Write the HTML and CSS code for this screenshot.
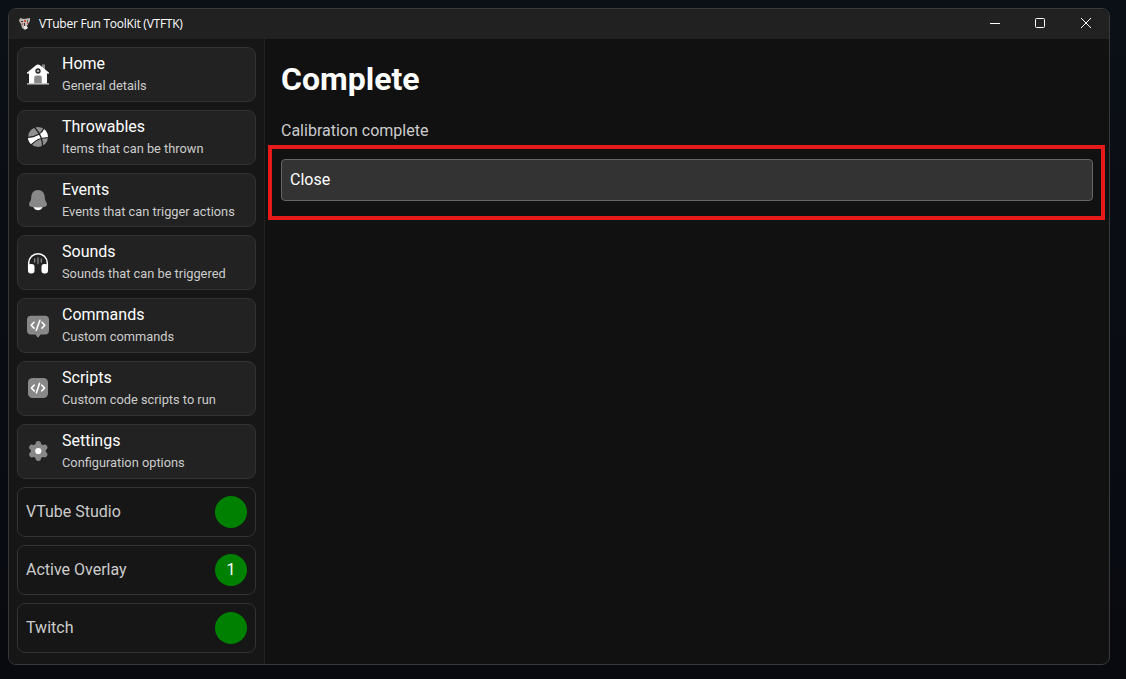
FILE: index.html
```html
<!DOCTYPE html>
<html lang="en">
<head>
<meta charset="utf-8">
<title>VTuber Fun ToolKit (VTFTK)</title>
<link rel="stylesheet" href="styles.css">
</head>
<body>
<div class="window">
  <header class="titlebar">
    <svg class="logo" viewBox="0 0 12 14"><path fill="#bdb7b3" d="M1 1 5 2 11 1 11 4 9 7 9 11 6 13 3 11 2 7 0 4Z"/><path fill="#40342f" d="M2 4h2v1H2zM5 6h1v3H5zM8 8h1v2H8z"/><path fill="#c5533e" d="M5 3h2v2H5zM3 6h1v2H3zM8 5h1v2H8z"/><path fill="#e9e6e3" d="M5 9h3v3H5z"/><path fill="#55745a" d="M8 3h1v2H8z"/></svg>
    <span class="app-name">VTuber Fun ToolKit (VTFTK)</span>
    <div class="controls">
      <svg viewBox="0 0 12 12"><path d="M1 6.5h10"/></svg>
      <svg viewBox="0 0 12 12"><rect x="1.5" y="1.5" width="9" height="9" rx="1"/></svg>
      <svg viewBox="0 0 12 12"><path d="m1 1 10 10M11 1 1 11"/></svg>
    </div>
  </header>
  <div class="body">
    <nav class="sidebar">
      <a class="item">
        <svg viewBox="0 0 24 24"><path fill="#888" d="M16 2.500h3v6l-3-2z"/><path fill="#fff" d="M3 21.800V11.200l-1.400.7-.7-1.200L9.700 3.400q2.300-1.800 4.600 0l8.800 7.300-.7 1.200-1.400-.7v10.600z"/><path fill="#ccc" d="M1 21.300h22v1.300H1z"/><path fill="#888" d="M8.200 21.300v-5.500q0-2.300 2.300-2.300h3q2.300 0 2.300 2.300v5.500z"/><circle cx="12" cy="9" r="2" fill="#aaa" stroke="#222" stroke-width="1.300"/></svg>
        <div class="text"><span class="name">Home</span><span class="desc">General details</span></div>
      </a>
      <a class="item">
        <svg viewBox="0 0 24 24"><circle cx="12" cy="12" r="10" fill="#909090"/><path fill="#fff" d="M2 12.500Q9 12.500 14 8.800 16.500 7 18 4 22 7.500 22 12.600 17 12 12.500 15 8 17.500 5.500 19.600 2 16.500 2 12.500Z"/><path fill="none" stroke="#222" stroke-width="1.200" d="M8.300 2Q17.500 12 16.500 22.500M1.500 12.300Q14 12 18.200 3M5 20Q12.500 12 22.500 12.800"/></svg>
        <div class="text"><span class="name">Throwables</span><span class="desc">Items that can be thrown</span></div>
      </a>
      <a class="item">
        <svg viewBox="0 0 24 24"><path fill="#fff" d="M7 18.500h10q-1.500 3.700-5 3.700t-5-3.700z"/><path fill="#888" d="M12 2c4 0 6.500 2.900 6.700 6.500.1 3.200.5 4 1.600 5.700 1.200 2 .8 4-1.100 4.500-4.600 1-9.800 1-14.400 0-1.900-.5-2.300-2.500-1.100-4.500 1.100-1.700 1.500-2.500 1.600-5.700C5.500 4.900 8 2 12 2Z"/></svg>
        <div class="text"><span class="name">Events</span><span class="desc">Events that can trigger actions</span></div>
      </a>
      <a class="item">
        <svg viewBox="0 0 24 24"><path fill="none" stroke="#fff" stroke-width="1.500" d="M2.700 18v-6a9.300 9.300 0 0 1 18.600 0v6"/><rect x="2" y="13" width="6.500" height="9.500" rx="2.700" fill="#fff"/><rect x="15.500" y="13" width="6.500" height="9.500" rx="2.700" fill="#fff"/><path stroke="#888" stroke-width="1.300" stroke-linecap="round" d="M8.700 8v3M12 7v5.500M15.300 8v3"/></svg>
        <div class="text"><span class="name">Sounds</span><span class="desc">Sounds that can be triggered</span></div>
      </a>
      <a class="item">
        <svg viewBox="0 0 24 24"><path fill="#888" d="M5 1.800h14q4 0 4 4v10.700q0 4-4 4h-4.500L12.800 23q-.8.900-1.600 0L9.500 20.500H5q-4 0-4-4V5.800q0-4 4-4Z"/><path class="code" d="M8 8.300 5.200 11.200 8 14.100M16 8.300l2.800 2.900L16 14.100M13.900 6.300l-3.600 9.900"/></svg>
        <div class="text"><span class="name">Commands</span><span class="desc">Custom commands</span></div>
      </a>
      <a class="item">
        <svg viewBox="0 0 24 24"><rect x="2" y="2" width="20" height="20" rx="4.500" fill="#888"/><path class="code" d="M8.200 9.100 5.400 12l2.800 2.900M15.800 9.100l2.800 2.900-2.800 2.900M13.600 7.300l-3.200 9.400"/></svg>
        <div class="text"><span class="name">Scripts</span><span class="desc">Custom code scripts to run</span></div>
      </a>
      <a class="item">
        <svg viewBox="0 0 24 24"><circle cx="12.300" cy="12" r="7.600" fill="#888"/><path stroke="#888" stroke-width="5.400" stroke-linecap="round" d="M12.300 4.700v14.600M5.900 8.300l12.800 7.400M18.700 8.300 5.900 15.700"/><circle cx="12.300" cy="12" r="3.100" fill="#fff"/></svg>
        <div class="text"><span class="name">Settings</span><span class="desc">Configuration options</span></div>
      </a>
      <div class="status"><span>VTube Studio</span><span class="dot"></span></div>
      <div class="status"><span>Active Overlay</span><span class="dot">1</span></div>
      <div class="status"><span>Twitch</span><span class="dot"></span></div>
    </nav>
    <main class="content">
      <h1>Complete</h1>
      <p>Calibration complete</p>
      <div class="highlight"><button class="close">Close</button></div>
    </main>
  </div>
</div>
</body>
</html>
```
FILE: styles.css
```css
* { box-sizing: border-box; }
body {
  margin: 0;
  height: 679px;
  padding: 8px 16px 14px 8px;
  overflow: hidden;
  background: linear-gradient(#0b0f16, #080a10);
  font-family: Roboto, sans-serif;
  color: #ccc;
}
.window {
  height: 657px;
  display: flex;
  flex-direction: column;
  border: 1px solid #393a3c;
  border-radius: 8px;
  overflow: hidden;
  background: #111;
}
.titlebar {
  height: 30px;
  flex: none;
  display: flex;
  align-items: center;
  background: #212121;
  padding: 0 17px 0 10px;
}
.logo { width: 12px; height: 14px; margin-right: 8px; }
.app-name {
  font: 12px/16px "Open Sans", sans-serif;
  letter-spacing: -0.25px;
  color: #fff;
}
.controls { margin-left: auto; display: flex; padding-bottom: 2px; }
.controls svg {
  width: 12px;
  height: 12px;
  fill: none;
  stroke: #fff;
  stroke-width: 1;
}
.controls svg:nth-child(1) { margin-right: 33px; }
.controls svg:nth-child(2) { margin-right: 34px; }
.body { flex: 1; display: flex; min-height: 0; }
.sidebar {
  width: 256px;
  flex: none;
  padding: 8px;
  display: flex;
  flex-direction: column;
  gap: 8px;
  background: #161616;
  border-right: 1px solid #222;
}
.item {
  height: 54.8px;
  flex: none;
  display: flex;
  align-items: center;
  gap: 12px;
  padding: 0 8px;
  background: #222;
  border: 1px solid #333;
  border-radius: 8px;
}
.item svg { width: 24px; height: 24px; flex: none; }
.code {
  fill: none;
  stroke: #fff;
  stroke-width: 1.6;
  stroke-linecap: round;
  stroke-linejoin: round;
}
.text {
  display: flex;
  flex-direction: column;
  padding-top: 1.3px;
  line-height: 22px;
  white-space: nowrap;
}
.name { font-size: 16px; color: #fff; }
.desc { font-size: 12.8px; }
.status {
  height: 50px;
  flex: none;
  display: flex;
  align-items: center;
  justify-content: space-between;
  padding: 0 8px;
  border: 1px solid #333;
  border-radius: 8px;
  font-size: 16px;
}
.dot {
  width: 32px;
  height: 32px;
  border-radius: 50%;
  background: green;
  color: #fff;
  line-height: 32px;
  text-align: center;
}
.content { flex: 1; padding: 21px 4px 0 3px; }
h1 {
  margin: 0 0 23px 13px;
  font-size: 32px;
  line-height: 38px;
  font-weight: 700;
  color: #fff;
}
p { margin: 0 0 4px 13px; font-size: 16px; line-height: 20px; }
.highlight {
  height: 75px;
  padding: 10px 8px 0 9px;
  border: 4px solid #e51b1b;
}
.close {
  display: block;
  width: 100%;
  height: 42px;
  padding: 0 8px 2px;
  text-align: left;
  background: #333;
  border: 1px solid #666;
  border-radius: 4px;
  font: 16px Roboto, sans-serif;
  color: #fff;
}
```
